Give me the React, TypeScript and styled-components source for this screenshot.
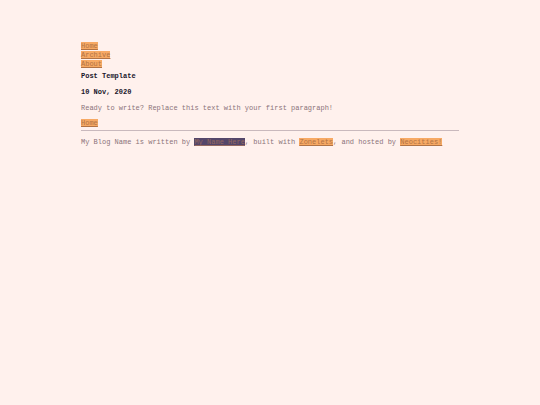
import React from 'react';
import styled, {createGlobalStyle} from 'styled-components';

const GlobalStyle = createGlobalStyle`
    body {
        margin: 0;
        background-color: #fff1ed;
        color: #8b737a;
        font-family: "Liberation Mono", "Courier New", monospace;
        font-size: 7px;
        line-height: 8px;
    }
`;

const Container = styled.div`
    width: 70%;
    margin: 0 auto;
    padding-top: 42px;
`;

const NavList = styled.ul`
    list-style: none;
    margin: 0 0 3px;
    padding: 0;
`;

const NavItem = styled.li`
    line-height: 9px;
`;

const TextLink = styled.a<{$dark?: boolean}>`
    color: ${({$dark}) => ($dark ? '#95695f' : '#b17345')};
    background-color: ${({$dark}) => ($dark ? '#54466a' : '#f7a964')};
    text-decoration: underline;
`;

const Title = styled.h1`
    margin: 0 0 8px;
    color: #20172b;
    font-size: 7px;
`;

const PostDate = styled.h2`
    margin: 0 0 8px;
    color: #20172b;
    font-size: 7px;
`;

const Paragraph = styled.p`
    margin: 0 0 7px;
`;

const Footer = styled.footer`
    margin-top: 3px;
    padding-top: 7px;
    border-top: 1px solid #c9b9bd;
`;

const navLinks = [
    {label: 'Home', href: '#home'},
    {label: 'Archive', href: '#archive'},
    {label: 'About', href: '#about'},
];

const App: React.FC = () => (
    <>
        <GlobalStyle/>
        <Container>
            <nav>
                <NavList>
                    {navLinks.map(({label, href}) => (
                        <NavItem key={label}><TextLink href={href}>{label}</TextLink></NavItem>
                    ))}
                </NavList>
            </nav>
            <main>
                <Title>Post Template</Title>
                <PostDate>10 Nov, 2020</PostDate>
                <Paragraph>Ready to write? Replace this text with your first paragraph!</Paragraph>
                <nav><TextLink href="#home">Home</TextLink></nav>
            </main>
            <Footer>
                My Blog Name is written by <TextLink href="#author" $dark>My Name Here</TextLink>, built
                with <TextLink href="#zonelets">Zonelets</TextLink>, and hosted
                by <TextLink href="#neocities">Neocities!</TextLink>
            </Footer>
        </Container>
    </>
);

export default App;
